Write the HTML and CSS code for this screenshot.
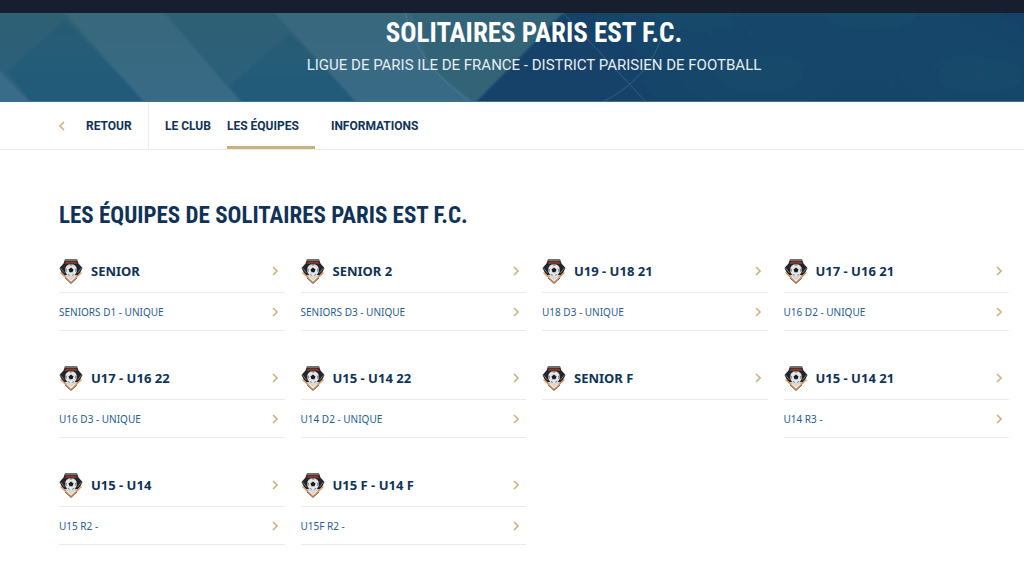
FILE: index.html
```html
<!DOCTYPE html>
<html lang="fr">
<head>
    <meta charset="UTF-8">
    <meta name="viewport" content="width=device-width, initial-scale=1.0">
    <title>Solitaires Paris Est F.C. - Les équipes</title>
    <link rel="stylesheet" href="styles.css">
</head>
<body>
    <svg class="sprite" aria-hidden="true">
        <symbol id="chevron" viewBox="0 0 6 10">
            <path d="M1 1l4 4-4 4" fill="none" stroke="currentColor" stroke-width="1.6"/>
        </symbol>
        <symbol id="crest" viewBox="0 0 24 26">
            <path d="M6 1.500h12l1.500 4 4 4.500-2.500 5-3.500 3.500h-11L3 15 .5 10l4-4.500z" fill="#242529"/>
            <path d="M1.500 10l4 5M22.500 10l-4 5" fill="none" stroke="#84878c" stroke-width=".8"/>
            <path d="M6 1h12l.5 2h-13z" fill="#6d7074"/>
            <path d="M7 3.500h10l1.500 2.500L12 5.500 5.500 6z" fill="#8b3a29"/>
            <path d="M5.500 17L12 22.500l6.500-5.500z" fill="#d9d9da"/>
            <path d="M1.500 14.500L12 24.500l10.500-10" fill="none" stroke="#e0955a" stroke-width="1.4"/>
            <path d="M6 20l6 5.500 6-5.500" fill="none" stroke="#5b4139" stroke-width=".8"/>
            <circle cx="12" cy="12" r="6" fill="#e4e6e8"/>
            <path d="M12 9.500l2.500 2-1 2.800h-3l-1-2.800z" fill="#1b1c20"/>
            <path d="M9.500 6.700l2.500 1 2.500-1L12 5.900zM6.200 10l1.600 1-.2 3-1.300-.8zM17.800 10l-1.600 1 .2 3 1.300-.8zM8.500 16.800l1.500-.8 1 1.900zM15.500 16.800l-1.500-.8-1 1.900z" fill="#777a80"/>
        </symbol>
    </svg>

    <div class="top-bar"></div>

    <header class="hero">
        <svg class="hero-bg" viewBox="0 13 1024 88" preserveAspectRatio="none" aria-hidden="true">
            <defs>
                <linearGradient id="teal" x1="0" y1="0" x2="0" y2="1">
                    <stop offset="0" stop-color="#2e6073"/>
                    <stop offset="1" stop-color="#2b607d"/>
                </linearGradient>
                <linearGradient id="stripe" x1="0" y1="0" x2="0" y2="1">
                    <stop offset="0" stop-color="#38677b"/>
                    <stop offset="1" stop-color="#396c88"/>
                </linearGradient>
                <linearGradient id="deep" x1="0" y1="0" x2="0" y2="1">
                    <stop offset="0" stop-color="#265c72"/>
                    <stop offset="1" stop-color="#235a7b"/>
                </linearGradient>
                <radialGradient id="glow">
                    <stop offset="0" stop-color="#1c4c6c" stop-opacity=".8"/>
                    <stop offset="1" stop-color="#1c4c6c" stop-opacity="0"/>
                </radialGradient>
                <filter id="soft"><feGaussianBlur stdDeviation="1"/></filter>
            </defs>
            <rect y="13" width="1024" height="88" fill="url(#teal)"/>
            <g filter="url(#soft)">
                <path d="M64 20L8 72l24 32h116z" fill="url(#deep)"/>
                <path d="M-5 66l37 38H-5z" fill="#396c88"/>
                <path d="M62 10h100l80 94h-96z" fill="url(#stripe)"/>
                <path d="M290 34l-60 52 14 18h116z" fill="url(#deep)"/>
                <path d="M272 10h159l55 94H358z" fill="url(#stripe)"/>
                <path d="M410 10h156L476 104 430 66z" fill="#336477"/>
                <path d="M566 10h470v94H474z" fill="#12426a"/>
                <ellipse cx="870" cy="10" rx="170" ry="70" fill="url(#glow)"/>
                <ellipse cx="760" cy="75" rx="150" ry="60" fill="url(#glow)"/>
                <ellipse cx="690" cy="15" rx="120" ry="50" fill="url(#glow)"/>
                <ellipse cx="980" cy="75" rx="150" ry="60" fill="url(#glow)"/>
            </g>
            <path d="M405 13Q418 66 472 103" fill="none" stroke="#52809a" stroke-opacity=".7"/>
            <path d="M563 13l84 90M600 103Q650 80 664 30" fill="none" stroke="#3d6d92" stroke-opacity=".7"/>
        </svg>
        <div class="hero-text">
            <h1>SOLITAIRES PARIS EST F.C.</h1>
            <p>LIGUE DE PARIS ILE DE FRANCE - DISTRICT PARISIEN DE FOOTBALL</p>
        </div>
    </header>

    <nav class="club-nav">
        <a href="#" class="back">
            <svg class="chevron chevron-left" aria-hidden="true"><use href="#chevron"/></svg>
            RETOUR
        </a>
        <a href="#">LE CLUB</a>
        <a href="#" class="active">LES ÉQUIPES</a>
        <a href="#">INFORMATIONS</a>
    </nav>

    <main>
        <h2>LES ÉQUIPES DE SOLITAIRES PARIS EST F.C.</h2>

        <div class="teams">
            <section class="team">
                <a href="#" class="team-name"><svg class="crest" aria-hidden="true"><use href="#crest"/></svg><span>SENIOR</span><svg class="chevron" aria-hidden="true"><use href="#chevron"/></svg></a>
                <a href="#" class="team-league"><span>SENIORS D1 - UNIQUE</span><svg class="chevron" aria-hidden="true"><use href="#chevron"/></svg></a>
            </section>
            <section class="team">
                <a href="#" class="team-name"><svg class="crest" aria-hidden="true"><use href="#crest"/></svg><span>SENIOR 2</span><svg class="chevron" aria-hidden="true"><use href="#chevron"/></svg></a>
                <a href="#" class="team-league"><span>SENIORS D3 - UNIQUE</span><svg class="chevron" aria-hidden="true"><use href="#chevron"/></svg></a>
            </section>
            <section class="team">
                <a href="#" class="team-name"><svg class="crest" aria-hidden="true"><use href="#crest"/></svg><span>U19 - U18 21</span><svg class="chevron" aria-hidden="true"><use href="#chevron"/></svg></a>
                <a href="#" class="team-league"><span>U18 D3 - UNIQUE</span><svg class="chevron" aria-hidden="true"><use href="#chevron"/></svg></a>
            </section>
            <section class="team">
                <a href="#" class="team-name"><svg class="crest" aria-hidden="true"><use href="#crest"/></svg><span>U17 - U16 21</span><svg class="chevron" aria-hidden="true"><use href="#chevron"/></svg></a>
                <a href="#" class="team-league"><span>U16 D2 - UNIQUE</span><svg class="chevron" aria-hidden="true"><use href="#chevron"/></svg></a>
            </section>
            <section class="team">
                <a href="#" class="team-name"><svg class="crest" aria-hidden="true"><use href="#crest"/></svg><span>U17 - U16 22</span><svg class="chevron" aria-hidden="true"><use href="#chevron"/></svg></a>
                <a href="#" class="team-league"><span>U16 D3 - UNIQUE</span><svg class="chevron" aria-hidden="true"><use href="#chevron"/></svg></a>
            </section>
            <section class="team">
                <a href="#" class="team-name"><svg class="crest" aria-hidden="true"><use href="#crest"/></svg><span>U15 - U14 22</span><svg class="chevron" aria-hidden="true"><use href="#chevron"/></svg></a>
                <a href="#" class="team-league"><span>U14 D2 - UNIQUE</span><svg class="chevron" aria-hidden="true"><use href="#chevron"/></svg></a>
            </section>
            <section class="team">
                <a href="#" class="team-name"><svg class="crest" aria-hidden="true"><use href="#crest"/></svg><span>SENIOR F</span><svg class="chevron" aria-hidden="true"><use href="#chevron"/></svg></a>
            </section>
            <section class="team">
                <a href="#" class="team-name"><svg class="crest" aria-hidden="true"><use href="#crest"/></svg><span>U15 - U14 21</span><svg class="chevron" aria-hidden="true"><use href="#chevron"/></svg></a>
                <a href="#" class="team-league"><span>U14 R3 -</span><svg class="chevron" aria-hidden="true"><use href="#chevron"/></svg></a>
            </section>
            <section class="team">
                <a href="#" class="team-name"><svg class="crest" aria-hidden="true"><use href="#crest"/></svg><span>U15 - U14</span><svg class="chevron" aria-hidden="true"><use href="#chevron"/></svg></a>
                <a href="#" class="team-league"><span>U15 R2 -</span><svg class="chevron" aria-hidden="true"><use href="#chevron"/></svg></a>
            </section>
            <section class="team">
                <a href="#" class="team-name"><svg class="crest" aria-hidden="true"><use href="#crest"/></svg><span>U15 F - U14 F</span><svg class="chevron" aria-hidden="true"><use href="#chevron"/></svg></a>
                <a href="#" class="team-league"><span>U15F R2 -</span><svg class="chevron" aria-hidden="true"><use href="#chevron"/></svg></a>
            </section>
        </div>
    </main>
</body>
</html>
```
FILE: styles.css
```css
* {
    margin: 0;
    padding: 0;
    box-sizing: border-box;
}

body {
    font-family: Roboto, "Noto Sans", sans-serif;
    background: #fff;
    color: #0f3358;
}

a {
    color: inherit;
    text-decoration: none;
}

.sprite {
    position: absolute;
    width: 0;
    height: 0;
}

.top-bar {
    height: 13px;
    background: #171f2e;
}

.hero {
    position: relative;
    border-bottom: 1px solid #3f6f90;
    color: #fff;
    text-align: center;
}

.hero-bg {
    position: absolute;
    inset: 0;
    width: 100%;
    height: 100%;
}

.hero-text {
    position: relative;
    padding: 0 0 24px 44px;
}

h1,
h2 {
    font-family: "Roboto Condensed", "Liberation Sans Narrow", "Liberation Sans", sans-serif;
    font-weight: bold;
}

h1 {
    font-size: 27px;
    line-height: 40px;
}

.hero-text p {
    font-size: 15px;
    line-height: 24px;
    color: #e6edf3;
}

.club-nav {
    display: flex;
    gap: 16px;
    height: 48px;
    padding-left: 59px;
    border-bottom: 1px solid #ebebeb;
    font-size: 12px;
    font-weight: bold;
}

.club-nav a {
    display: flex;
    align-items: center;
}

.club-nav .back {
    gap: 21px;
    width: 90px;
    border-right: 1px solid #ebebeb;
}

.club-nav .active {
    padding: 3px 16px 0 0;
    border-bottom: 3px solid #c9b07c;
}

.chevron {
    flex: none;
    width: 6px;
    height: 10px;
    color: #cfb27c;
}

.chevron-left {
    transform: scaleX(-1);
}

main {
    padding: 46px 15px 32px 59px;
}

h2 {
    font-size: 23px;
    line-height: 40px;
    margin-bottom: 14px;
}

.teams {
    display: grid;
    grid-template-columns: repeat(4, 1fr);
    gap: 26px 16px;
}

.team a {
    display: flex;
    align-items: center;
    justify-content: space-between;
    padding-right: 7px;
    border-bottom: 1px solid #ebebeb;
    font-family: "Noto Sans", sans-serif;
}

.team .team-name {
    gap: 8px;
    height: 43px;
    font-size: 13px;
    font-weight: bold;
}

.team-name span {
    flex: 1;
}

.crest {
    width: 24px;
    height: 26px;
}

.team .team-league {
    height: 38px;
    font-size: 10px;
    color: #1f5c99;
}

@media (max-width: 760px) {
    .teams {
        grid-template-columns: repeat(2, 1fr);
    }

    .hero-text {
        padding-left: 0;
    }
}
```
